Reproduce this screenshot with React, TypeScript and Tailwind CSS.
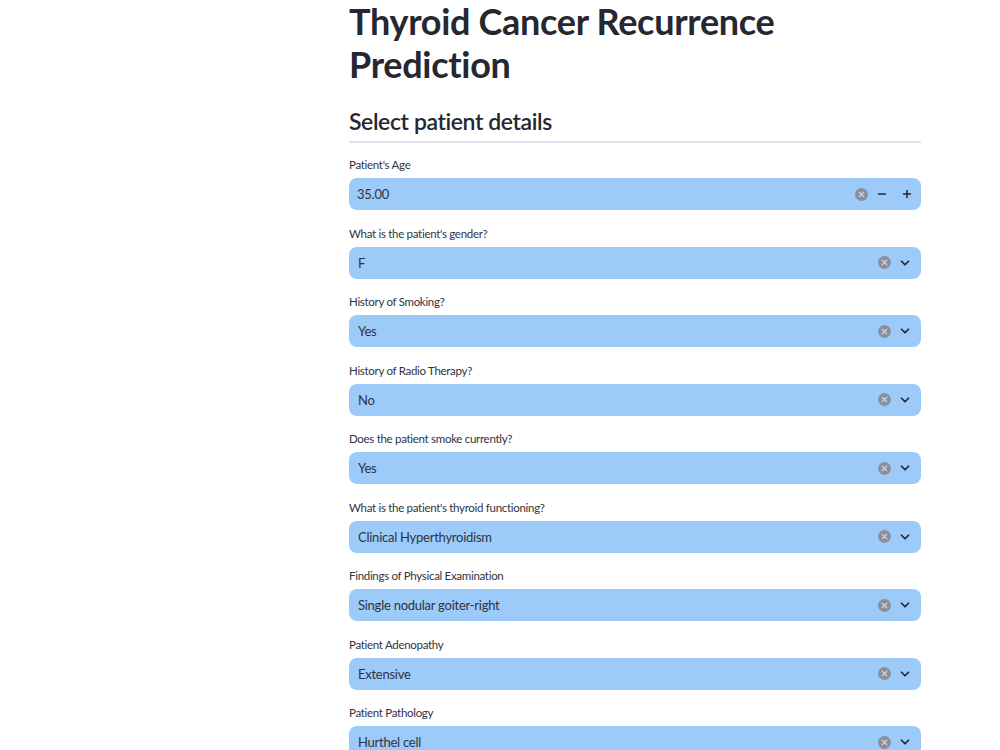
import { Minus, Plus, ChevronDown, X } from 'lucide-react';

const FIELDS = [
  { label: "What is the patient's gender?", value: 'F' },
  { label: 'History of Smoking?', value: 'Yes' },
  { label: 'History of Radio Therapy?', value: 'No' },
  { label: 'Does the patient smoke currently?', value: 'Yes' },
  { label: "What is the patient's thyroid functioning?", value: 'Clinical Hyperthyroidism' },
  { label: 'Findings of Physical Examination', value: 'Single nodular goiter-right' },
  { label: 'Patient Adenopathy', value: 'Extensive' },
  { label: 'Patient Pathology', value: 'Hurthel cell' },
];

function ClearIcon() {
  return (
    <span className="flex h-[13px] w-[13px] items-center justify-center rounded-full bg-[#8c8f9a]">
      <X className="h-[9px] w-[9px] text-[#c9d6e6]" strokeWidth={3} />
    </span>
  );
}

function Field({ label, children }: { label: string; children: React.ReactNode }) {
  return (
    <div className="flex h-[68.5px] flex-col">
      <label className="h-5 text-[11.5px] leading-5 tracking-[-0.3px] text-[#31333f]">{label}</label>
      <div className="mt-[3px] flex h-[32px] items-center rounded-lg bg-[#9ccaf9] text-[13px] tracking-[-0.25px] text-[#31333f]">
        {children}
      </div>
    </div>
  );
}

export default function App() {
  return (
    <div
      className="min-h-screen bg-white text-[#31333f]"
      style={{ fontFamily: 'Lato, "Noto Sans", sans-serif' }}
    >
      <div className="ml-[349px] h-[750px] w-[572px] overflow-hidden">
        <h1 className="text-[36px] font-bold leading-[43px] tracking-[-0.3px] text-[#262730]">
          Thyroid Cancer Recurrence Prediction
        </h1>
        <h2 className="mt-[19px] text-[23px] font-semibold leading-[32px] tracking-[-0.4px] text-[#262730]">
          Select patient details
        </h2>
        <div className="mt-[4px] h-[2px] bg-[#e2e2ec]" />
        <div className="mt-[12px] flex flex-col">
          <Field label="Patient's Age">
            <span className="flex-1 pl-2 pt-[2px]">35.00</span>
            <div className="flex items-center pr-[8px]">
              <ClearIcon />
              <Minus className="ml-[8px] h-3 w-3 text-[#262730]" strokeWidth={3} />
              <Plus className="ml-[13px] h-3 w-3 text-[#262730]" strokeWidth={3} />
            </div>
          </Field>
          {FIELDS.map((f) => (
            <Field key={f.label} label={f.label}>
              <span className="flex-1 pl-[9px] pt-[2px]">{f.value}</span>
              <div className="flex items-center gap-[7px] pr-[9px]">
                <ClearIcon />
                <ChevronDown className="h-[14px] w-[14px] text-[#262730]" strokeWidth={3} />
              </div>
            </Field>
          ))}
        </div>
      </div>
    </div>
  );
}
